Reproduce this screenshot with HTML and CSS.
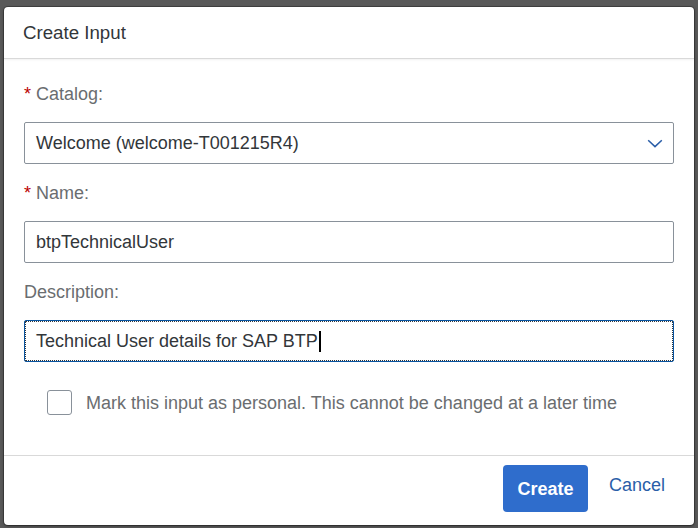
FILE: index.html
```html
<!DOCTYPE html>
<html lang="en">
<head>
<meta charset="utf-8">
<title>Create Input</title>
<link rel="stylesheet" href="styles.css">
</head>
<body>
<div class="dialog">
  <div class="dialog-header">Create Input</div>
  <div class="dialog-content">
    <div class="field">
      <div class="label"><span class="req">*</span> Catalog:</div>
      <div class="input select">
        <span class="value">Welcome (welcome-T001215R4)</span>
        <svg class="chevron" width="16" height="9" viewBox="0 0 16 9"><path d="M1.2 1.2 L8 7.6 L14.8 1.2" fill="none" stroke="#2a5ea8" stroke-width="1.5"/></svg>
      </div>
    </div>
    <div class="field">
      <div class="label"><span class="req">*</span> Name:</div>
      <div class="input"><span class="value">btpTechnicalUser</span></div>
    </div>
    <div class="field">
      <div class="label">Description:</div>
      <div class="input focused"><span class="value">Technical User details for SAP BTP</span><span class="caret"></span></div>
    </div>
    <div class="check-row">
      <span class="checkbox"></span>
      <span class="check-text">Mark this input as personal. This cannot be changed at a later time</span>
    </div>
  </div>
  <div class="dialog-footer">
    <button class="btn btn-primary">Create</button>
    <button class="btn btn-link">Cancel</button>
  </div>
</div>
</body>
</html>
```
FILE: styles.css
```css
html, body {
  margin: 0;
  padding: 0;
}
body {
  background: #595959;
  font-family: "Liberation Sans", Arial, sans-serif;
  font-size: 18px;
  color: #32363a;
  height: 528px;
  overflow: hidden;
}
.dialog {
  margin: 7px 4px 0 4px;
  height: 518px;
  background: #fff;
  border-radius: 4px;
  box-shadow: 0 0 0 1px rgba(0,0,0,0.25), 0 1px 3px rgba(0,0,0,0.45);
  display: flex;
  flex-direction: column;
  overflow: hidden;
}
.dialog-header {
  height: 51px;
  line-height: 51px;
  padding: 0 19px;
  font-size: 18.7px;
  color: #32363a;
  border-bottom: 1px solid #d9d9d9;
  box-shadow: 0 1px 2px rgba(0,0,0,0.06);
  flex: none;
}
.dialog-content {
  flex: 1;
  padding: 25px 20px 0 20px;
}
.field {
  margin-bottom: 19px;
}
.label {
  line-height: 20px;
  color: #6a6d70;
  margin-bottom: 18px;
}
.req {
  color: #bb0000;
}
.input {
  height: 42px;
  box-sizing: border-box;
  border: 1px solid #89919a;
  border-radius: 2px;
  padding: 0 11px;
  display: flex;
  align-items: center;
  color: #32363a;
}
.select {
  justify-content: space-between;
}
.chevron {
  display: block;
  margin-right: -1px;
}
.focused {
  border-color: #0854a0;
  outline: 1px dotted #32363a;
  outline-offset: -2px;
}
.caret {
  width: 2px;
  height: 21px;
  background: #000;
  margin-left: 1px;
}
.check-row {
  margin-top: 28px;
  padding-left: 23px;
  display: flex;
  align-items: center;
  gap: 14px;
  height: 25px;
}
.checkbox {
  width: 25px;
  height: 25px;
  box-sizing: border-box;
  border: 1px solid #89919a;
  border-radius: 3px;
  flex: none;
}
.check-text {
  color: #6a6d70;
  line-height: 25px;
  padding-top: 2px;
}
.dialog-footer {
  flex: none;
  height: 60px;
  border-top: 1px solid #d9d9d9;
  display: flex;
  justify-content: flex-end;
  align-items: flex-start;
  padding: 9px 21px 0 0;
  gap: 13px;
}
.btn {
  font-family: "Liberation Sans", Arial, sans-serif;
  font-size: 18px;
  border: none;
  background: none;
  cursor: pointer;
  height: 47px;
  margin: 0;
}
.btn-primary {
  background: #2f6dcc;
  color: #fff;
  font-weight: bold;
  border-radius: 4px;
  width: 85px;
  padding: 2px 0 0 0;
}
.btn-link {
  color: #2a5ea8;
  padding: 0 8px;
  margin-top: -3px;
}
```
